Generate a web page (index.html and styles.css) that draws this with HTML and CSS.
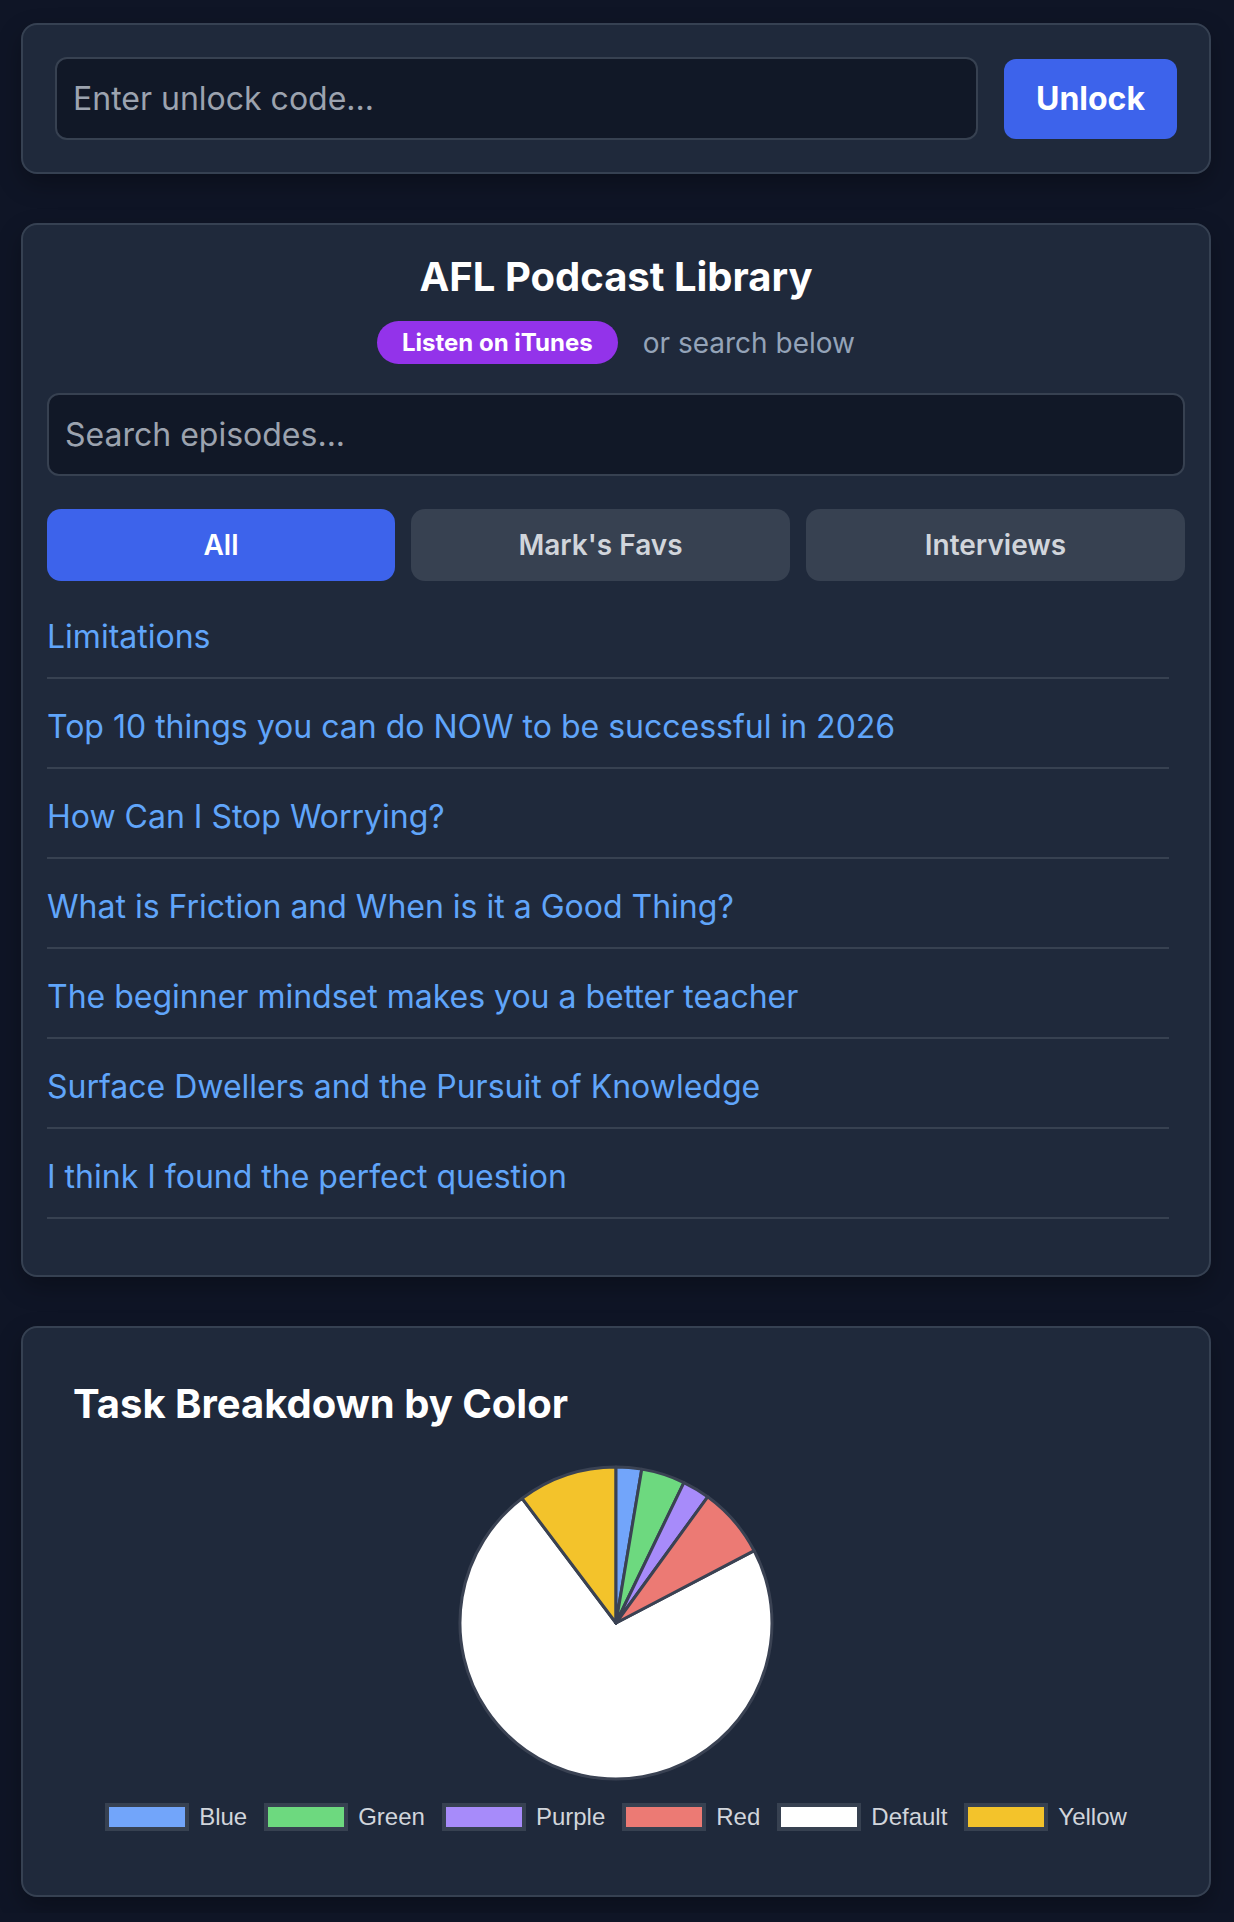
FILE: index.html
```html
<!DOCTYPE html>
<html lang="en">
<head>
<meta charset="utf-8">
<title>AFL Podcast Library</title>
<link rel="stylesheet" href="styles.css">
</head>
<body>
<main class="page">
  <section class="card unlock-card">
    <input class="field unlock-field" type="text" placeholder="Enter unlock code...">
    <button class="btn-primary" type="button">Unlock</button>
  </section>

  <section class="card library-card">
    <h1 class="library-title">AFL Podcast Library</h1>
    <div class="source-row">
      <a class="itunes-pill" href="#">Listen on iTunes</a>
      <span class="source-hint">or search below</span>
    </div>
    <input class="field search-field" type="text" placeholder="Search episodes...">
    <div class="tabs">
      <button class="tab tab-active" type="button">All</button>
      <button class="tab" type="button">Mark's Favs</button>
      <button class="tab" type="button">Interviews</button>
    </div>
    <ul class="episodes">
      <li class="episode"><a href="#">Limitations</a></li>
      <li class="episode"><a href="#">Top 10 things you can do NOW to be successful in 2026</a></li>
      <li class="episode"><a href="#">How Can I Stop Worrying?</a></li>
      <li class="episode"><a href="#">What is Friction and When is it a Good Thing?</a></li>
      <li class="episode"><a href="#">The beginner mindset makes you a better teacher</a></li>
      <li class="episode"><a href="#">Surface Dwellers and the Pursuit of Knowledge</a></li>
      <li class="episode"><a href="#">I think I found the perfect question</a></li>
    </ul>
  </section>

  <section class="card chart-card">
    <h2 class="chart-title">Task Breakdown by Color</h2>
    <svg class="pie" width="330" height="330" viewBox="0 0 330 330" aria-label="Pie chart">
      <g stroke="#3a4253" stroke-width="3" stroke-linejoin="round">
        <path fill="#ffffff" d="M165,165 L303.2,92.7 A156,156 0 1 1 71.1,40.4 Z"/>
        <path fill="#f3c32b" d="M165,165 L71.1,40.4 A156,156 0 0 1 165,9 Z"/>
        <path fill="#72a5fa" d="M165,165 L165,9 A156,156 0 0 1 190.74,11.14 Z"/>
        <path fill="#6dd97f" d="M165,165 L190.74,11.14 A156,156 0 0 1 232.9,24.55 Z"/>
        <path fill="#a78bfa" d="M165,165 L232.9,24.55 A156,156 0 0 1 256.7,38.8 Z"/>
        <path fill="#ec7a74" d="M165,165 L256.7,38.8 A156,156 0 0 1 303.2,92.7 Z"/>
      </g>
    </svg>
    <ul class="legend">
      <li class="legend-item"><span class="swatch swatch-blue"></span>Blue</li>
      <li class="legend-item"><span class="swatch swatch-green"></span>Green</li>
      <li class="legend-item"><span class="swatch swatch-purple"></span>Purple</li>
      <li class="legend-item"><span class="swatch swatch-red"></span>Red</li>
      <li class="legend-item"><span class="swatch swatch-default"></span>Default</li>
      <li class="legend-item"><span class="swatch swatch-yellow"></span>Yellow</li>
    </ul>
  </section>
</main>
</body>
</html>
```

FILE: styles.css
```css
* {
  box-sizing: border-box;
}

html, body {
  margin: 0;
  background: #0f1526;
}

body {
  font-family: Inter, "Noto Sans", sans-serif;
  color: #e5e7eb;
}

.page {
  display: flex;
  flex-direction: column;
  gap: 49px;
  padding: 23px 23px 16px 21px;
}

.card {
  background: #1f293b;
  border: 2px solid #364152;
  border-radius: 16px;
  box-shadow: 0 10px 24px rgba(0, 0, 0, 0.28);
}

/* unlock */
.unlock-card {
  display: flex;
  align-items: center;
  gap: 26px;
  padding: 32px;
}

.field {
  display: block;
  width: 100%;
  background: #111827;
  border: 2px solid #374151;
  border-radius: 12px;
  padding: 20px 16px;
  font-family: Inter, sans-serif;
  font-size: 32px;
  line-height: 39px;
  color: #e5e7eb;
  outline: none;
}

.field::placeholder {
  color: #9ca3af;
}

.unlock-field {
  flex: 1;
}

.btn-primary {
  background: #3d63eb;
  color: #ffffff;
  border: 0;
  border-radius: 12px;
  padding: 16px 32px;
  font-family: Inter, sans-serif;
  font-weight: 700;
  font-size: 32px;
  line-height: 48px;
}

/* library */
.library-card {
  padding: 24px;
}

.library-title {
  margin: 0 0 16px;
  text-align: center;
  font-size: 40px;
  line-height: 56px;
  font-weight: 700;
  color: #ffffff;
}

.source-row {
  display: flex;
  justify-content: center;
  align-items: center;
  gap: 25px;
  margin-bottom: 29px;
}

.itunes-pill {
  background: #9333ea;
  color: #ffffff;
  text-decoration: none;
  font-weight: 700;
  font-size: 24px;
  line-height: 27px;
  padding: 8px 25px;
  border-radius: 999px;
}

.source-hint {
  color: #94a3b8;
  font-size: 28px;
  line-height: 40px;
}

.search-field {
  margin-bottom: 33px;
}

.tabs {
  display: grid;
  grid-template-columns: 348fr 379fr 379fr;
  gap: 16px;
  margin-bottom: 16px;
}

.tab {
  height: 72px;
  border: 0;
  border-radius: 14px;
  background: #374151;
  color: #d1d5db;
  font-family: Inter, sans-serif;
  font-weight: 600;
  font-size: 28px;
}

.tab-active {
  background: #3d63eb;
  color: #ffffff;
}

.episodes {
  list-style: none;
  margin: 0;
  padding: 0 16px 24px 0;
}

.episode {
  padding: 16px 0;
  margin-bottom: 8px;
  border-bottom: 2px solid #374151;
  font-size: 32px;
  line-height: 48px;
}

.episode a {
  color: #60a5fa;
  text-decoration: none;
}

/* chart */
.chart-card {
  padding: 52px 50px 64px;
}

.chart-title {
  margin: 0 0 30px;
  font-size: 40px;
  line-height: 48px;
  font-weight: 700;
  color: #ffffff;
}

.pie {
  display: block;
  margin: 0 auto;
}

.legend {
  list-style: none;
  margin: 15px 0 0;
  padding: 0;
  display: flex;
  justify-content: center;
  gap: 17px;
}

.legend-item {
  display: flex;
  align-items: center;
  gap: 10px;
  font-family: "Liberation Sans", Arial, sans-serif;
  font-size: 24px;
  line-height: 28px;
  color: #d1d5db;
}

.swatch {
  display: block;
  width: 84px;
  height: 28px;
  border: 4px solid #374151;
}

.swatch-blue { background: #72a5fa; }
.swatch-green { background: #6dd97f; }
.swatch-purple { background: #a78bfa; }
.swatch-red { background: #ec7a74; }
.swatch-default { background: #ffffff; }
.swatch-yellow { background: #f3c32b; }
```
